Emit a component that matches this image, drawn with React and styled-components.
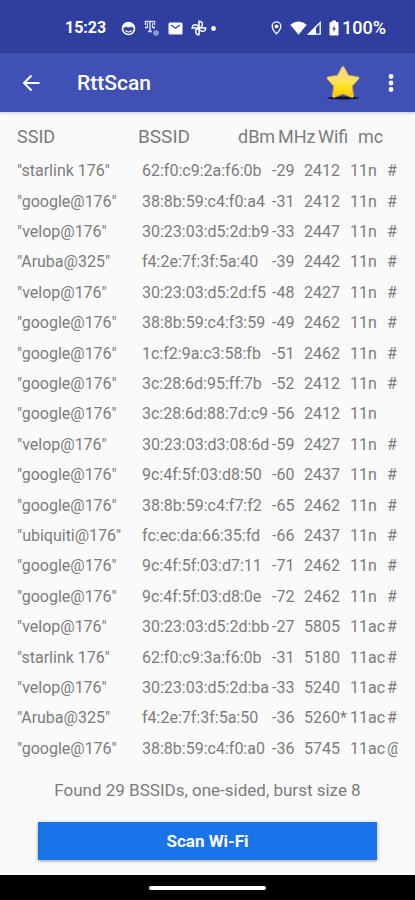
import React from "react";
import styled, { createGlobalStyle } from "styled-components";

const GlobalStyle = createGlobalStyle`
  * { box-sizing: border-box; }
  body { margin: 0; background: #fafafa; font-family: Roboto, sans-serif; }
`;

const Screen = styled.div`
  display: flex;
  flex-direction: column;
  min-height: 100vh;
  background: #fafafa;
`;

const StatusBar = styled.div`
  display: flex;
  align-items: center;
  justify-content: space-between;
  height: 53px;
  padding: 3px 29px 0 65px;
  background: #303f9f;
  color: #fff;
`;

const StatusGroup = styled.div`
  display: flex;
  align-items: center;
  gap: ${(p) => p.$gap}px;
`;

const Clock = styled.span`
  margin-right: 7px;
  font-size: 16px;
  font-weight: 700;
  line-height: 20px;
`;

const Battery = styled.span`
  font-size: 18px;
  font-weight: 500;
  line-height: 20px;
`;

const AppBar = styled.header`
  display: flex;
  align-items: center;
  height: 59px;
  padding: 0 0 0 16px;
  background: #3f51b5;
  color: #fff;
  box-shadow: 0 1px 3px rgba(0, 0, 0, 0.2);
`;

const IconButton = styled.button`
  display: flex;
  align-items: center;
  justify-content: center;
  width: ${(p) => p.$width}px;
  height: 48px;
  padding: 0;
  border: 0;
  background: none;
  color: inherit;
`;

const Title = styled.h1`
  flex: 1;
  margin: 0 0 0 32px;
  font-size: 21px;
  font-weight: 500;
  line-height: 28px;
`;

const Content = styled.main`
  display: flex;
  flex: 1;
  flex-direction: column;
  padding: 12px 17px 15px;
  color: #7c7c7c;
`;

const Table = styled.table`
  display: flex;
  flex: 1;
  flex-direction: column;
  line-height: 20px;
  text-align: left;
  white-space: nowrap;
`;

const Head = styled.thead`
  display: block;
`;

const HeadRow = styled.tr`
  display: grid;
  grid-template-columns: 121fr 100fr 40fr 40fr 40fr 40fr;
  align-items: center;
  height: 32px;
  padding-bottom: 6px;
`;

const HeadCell = styled.th`
  min-width: 0;
  padding: 0;
  font-size: ${(p) => (p.$large ? 19 : 18)}px;
  font-weight: 400;
`;

const Body = styled.tbody`
  display: grid;
  flex: 1;
  grid-auto-rows: 1fr;
`;

const Row = styled.tr`
  display: grid;
  grid-template-columns: 125fr 130fr 32fr 46fr 37fr 11fr;
  align-items: center;
`;

const Cell = styled.td`
  min-width: 0;
  padding: 0;
  font-size: 16px;

  &:last-child {
    overflow: hidden;
  }
`;

const Summary = styled.p`
  margin: 16px 0 22px;
  font-size: 17px;
  line-height: 20px;
  text-align: center;
`;

const ScanButton = styled.button`
  height: 38px;
  margin: 0 21px;
  border: 0;
  background: #1a73e8;
  color: #fff;
  box-shadow: 0 1px 3px rgba(0, 0, 0, 0.4);
  font-family: inherit;
  font-size: 17px;
  font-weight: 700;
`;

const NavBar = styled.div`
  display: flex;
  align-items: center;
  justify-content: center;
  height: 25px;
  background: #000;
`;

const NavHandle = styled.div`
  width: 28%;
  height: 4px;
  border-radius: 2px;
  background: #fff;
`;

const headings = ["SSID", "BSSID", "dBm", "MHz", "Wifi", "mc"];

const networks = [
  ["starlink 176", "62:f0:c9:2a:f6:0b", "-29", "2412", "11n", "#"],
  ["google@176", "38:8b:59:c4:f0:a4", "-31", "2412", "11n", "#"],
  ["velop@176", "30:23:03:d5:2d:b9", "-33", "2447", "11n", "#"],
  ["Aruba@325", "f4:2e:7f:3f:5a:40", "-39", "2442", "11n", "#"],
  ["velop@176", "30:23:03:d5:2d:f5", "-48", "2427", "11n", "#"],
  ["google@176", "38:8b:59:c4:f3:59", "-49", "2462", "11n", "#"],
  ["google@176", "1c:f2:9a:c3:58:fb", "-51", "2462", "11n", "#"],
  ["google@176", "3c:28:6d:95:ff:7b", "-52", "2412", "11n", "#"],
  ["google@176", "3c:28:6d:88:7d:c9", "-56", "2412", "11n", ""],
  ["velop@176", "30:23:03:d3:08:6d", "-59", "2427", "11n", "#"],
  ["google@176", "9c:4f:5f:03:d8:50", "-60", "2437", "11n", "#"],
  ["google@176", "38:8b:59:c4:f7:f2", "-65", "2462", "11n", "#"],
  ["ubiquiti@176", "fc:ec:da:66:35:fd", "-66", "2437", "11n", "#"],
  ["google@176", "9c:4f:5f:03:d7:11", "-71", "2462", "11n", "#"],
  ["google@176", "9c:4f:5f:03:d8:0e", "-72", "2462", "11n", "#"],
  ["velop@176", "30:23:03:d5:2d:bb", "-27", "5805", "11ac", "#"],
  ["starlink 176", "62:f0:c9:3a:f6:0b", "-31", "5180", "11ac", "#"],
  ["velop@176", "30:23:03:d5:2d:ba", "-33", "5240", "11ac", "#"],
  ["Aruba@325", "f4:2e:7f:3f:5a:50", "-36", "5260*", "11ac", "#"],
  ["google@176", "38:8b:59:c4:f0:a0", "-36", "5745", "11ac", "@"],
];

const FaceIcon = () => (
  <svg width="15" height="15" viewBox="0 0 15 15" aria-hidden="true">
    <circle cx="7.5" cy="7.5" r="6" fill="none" stroke="#fff" strokeWidth="1.6" />
    <path d="M1.5 6.5V4.5Q7.5 -1 13.5 4.5V6.5Q11 7 10 5.5Q7.5 7.5 5 5.5Q4 7 1.5 6.5Z" fill="#fff" />
    <path d="M4.5 9.5Q7.5 12.5 10.5 9.5" fill="none" stroke="#fff" strokeWidth="1.1" />
  </svg>
);

const CarrierIcon = () => (
  <svg width="16" height="17" viewBox="0 0 16 17" aria-hidden="true">
    <path d="M1.5 5V1.5H10.5V5M6 1.5V11M4 11.5H8" fill="none" stroke="#d5daf2" strokeWidth="1.5" />
    <path d="M1 7.5H3M9 7.5H11" stroke="#d5daf2" strokeWidth="2" />
    <path d="M3.5 3V8M8.5 3V8" stroke="#d5daf2" strokeWidth="1" />
    <circle cx="12" cy="13" r="2.8" fill="#8f99d2" />
  </svg>
);

const MailIcon = () => (
  <svg width="15" height="13" viewBox="0 0 15 13" aria-hidden="true">
    <rect x="0.5" y="0.5" width="14" height="12" rx="1.5" fill="#fff" />
    <path d="M3 3L7.5 6.2L12 3" fill="none" stroke="#303f9f" strokeWidth="1.3" />
  </svg>
);

const PinwheelIcon = () => (
  <svg width="16" height="16" viewBox="0 0 16 16" fill="none" stroke="#fff" strokeWidth="1.5" aria-hidden="true">
    <path d="M8 8V1.2Q11.8 1.5 11.3 5Q11 7.5 8 8Z" />
    <path d="M8 8H14.8Q14.5 11.8 11 11.3Q8.500 11 8 8Z" />
    <path d="M8 8V14.8Q4.2 14.5 4.7 11Q5 8.5 8 8Z" />
    <path d="M8 8H1.2Q1.5 4.2 5 4.7Q7.5 5 8 8Z" />
  </svg>
);

const DotIcon = () => (
  <svg width="5" height="5" viewBox="0 0 5 5" aria-hidden="true">
    <circle cx="2.5" cy="2.5" r="2.4" fill="#fff" />
  </svg>
);

const PinIcon = () => (
  <svg width="11" height="14" viewBox="0 0 11 14" aria-hidden="true">
    <path d="M5.5 12.8Q1.2 8.5 1.2 5.2A4.3 4.3 0 0 1 9.8 5.2Q9.8 8.5 5.5 12.8Z" fill="none" stroke="#fff" strokeWidth="1.3" />
    <circle cx="5.5" cy="5.3" r="1.9" fill="#fff" />
  </svg>
);

const WifiIcon = () => (
  <svg width="17" height="14" viewBox="0 0 17 14" aria-hidden="true">
    <path d="M0.3 3.8Q8.5 -2.8 16.7 3.8L8.5 13.8Z" fill="#fff" />
  </svg>
);

const SignalIcon = () => (
  <svg width="14" height="14" viewBox="0 0 14 14" aria-hidden="true">
    <path d="M13.2 1.5V13.2H1.5Z" fill="none" stroke="#fff" strokeWidth="1.3" />
    <path d="M0.5 13.5L9 5V13.5Z" fill="#fff" />
  </svg>
);

const BatteryIcon = () => (
  <svg width="10" height="16" viewBox="0 0 10 16" aria-hidden="true">
    <path d="M3 0.5H7V2H8.5Q9.5 2 9.5 3V14.5Q9.5 15.5 8.5 15.5H1.5Q0.5 15.5 0.5 14.5V3Q0.5 2 1.5 2H3Z" fill="#fff" />
    <path d="M5.4 5.5L3.3 9.2H4.7V12L6.7 8.2H5.4Z" fill="#303f9f" />
  </svg>
);

const BackIcon = () => (
  <svg width="20" height="20" viewBox="0 0 20 20" fill="none" stroke="#fff" strokeWidth="2" aria-hidden="true">
    <path d="M18.500 10H3M10.500 2.500L3 10L10.500 17.500" />
  </svg>
);

const StarIcon = () => (
  <svg width="36" height="36" viewBox="0 0 36 36" aria-hidden="true">
    <defs>
      <linearGradient id="star-fill" x1="0" y1="0" x2="0" y2="1">
        <stop offset="0" stopColor="#f5d58c" />
        <stop offset="0.45" stopColor="#ffe260" />
        <stop offset="0.7" stopColor="#ffdf16" />
        <stop offset="1" stopColor="#f3be18" />
      </linearGradient>
    </defs>
    <ellipse cx="18" cy="33" rx="16" ry="1.5" fill="#10131f" />
    <path
      d="M16.800 2Q18 0.500 19.200 2L23.500 10.200L33 11.800Q35 12.500 33.800 14L27.300 21.200L28.800 31Q28.500 33 26.500 32.500L18 29L9.500 32.500Q7.500 33 7.200 31L8.700 21.200L2.200 14Q1 12.500 3 11.800L12.500 10.200Z"
      fill="url(#star-fill)"
      stroke="#b99a58"
      strokeWidth="0.8"
      strokeLinejoin="round"
    />
  </svg>
);

const MoreIcon = () => (
  <svg width="6" height="20" viewBox="0 0 6 20" fill="#fff" aria-hidden="true">
    <circle cx="3" cy="3.5" r="2.4" />
    <circle cx="3" cy="10" r="2.4" />
    <circle cx="3" cy="16.5" r="2.4" />
  </svg>
);

export default function App() {
  return (
    <Screen>
      <GlobalStyle />
      <StatusBar>
        <StatusGroup $gap={8}>
          <Clock>15:23</Clock>
          <FaceIcon />
          <CarrierIcon />
          <MailIcon />
          <StatusGroup $gap={4}>
            <PinwheelIcon />
            <DotIcon />
          </StatusGroup>
        </StatusGroup>
        <StatusGroup $gap={3}>
          <StatusGroup $gap={8}>
            <PinIcon />
            <StatusGroup $gap={0}>
              <WifiIcon />
              <SignalIcon />
            </StatusGroup>
            <BatteryIcon />
          </StatusGroup>
          <Battery>100%</Battery>
        </StatusGroup>
      </StatusBar>
      <AppBar>
        <IconButton $width={29} aria-label="Back">
          <BackIcon />
        </IconButton>
        <Title>RttScan</Title>
        <IconButton $width={48} aria-label="Favorite">
          <StarIcon />
        </IconButton>
        <IconButton $width={48} aria-label="More options">
          <MoreIcon />
        </IconButton>
      </AppBar>
      <Content>
        <Table>
          <Head>
            <HeadRow>
              {headings.map((h) => (
                <HeadCell key={h} scope="col" $large={h === "BSSID"}>
                  {h}
                </HeadCell>
              ))}
            </HeadRow>
          </Head>
          <Body>
            {networks.map(([ssid, ...rest]) => (
              <Row key={rest[0]}>
                <Cell>{`"${ssid}"`}</Cell>
                {rest.map((value, i) => (
                  <Cell key={i}>{value}</Cell>
                ))}
              </Row>
            ))}
          </Body>
        </Table>
        <Summary>Found 29 BSSIDs, one-sided, burst size 8</Summary>
        <ScanButton type="button">Scan Wi-Fi</ScanButton>
      </Content>
      <NavBar>
        <NavHandle />
      </NavBar>
    </Screen>
  );
}
